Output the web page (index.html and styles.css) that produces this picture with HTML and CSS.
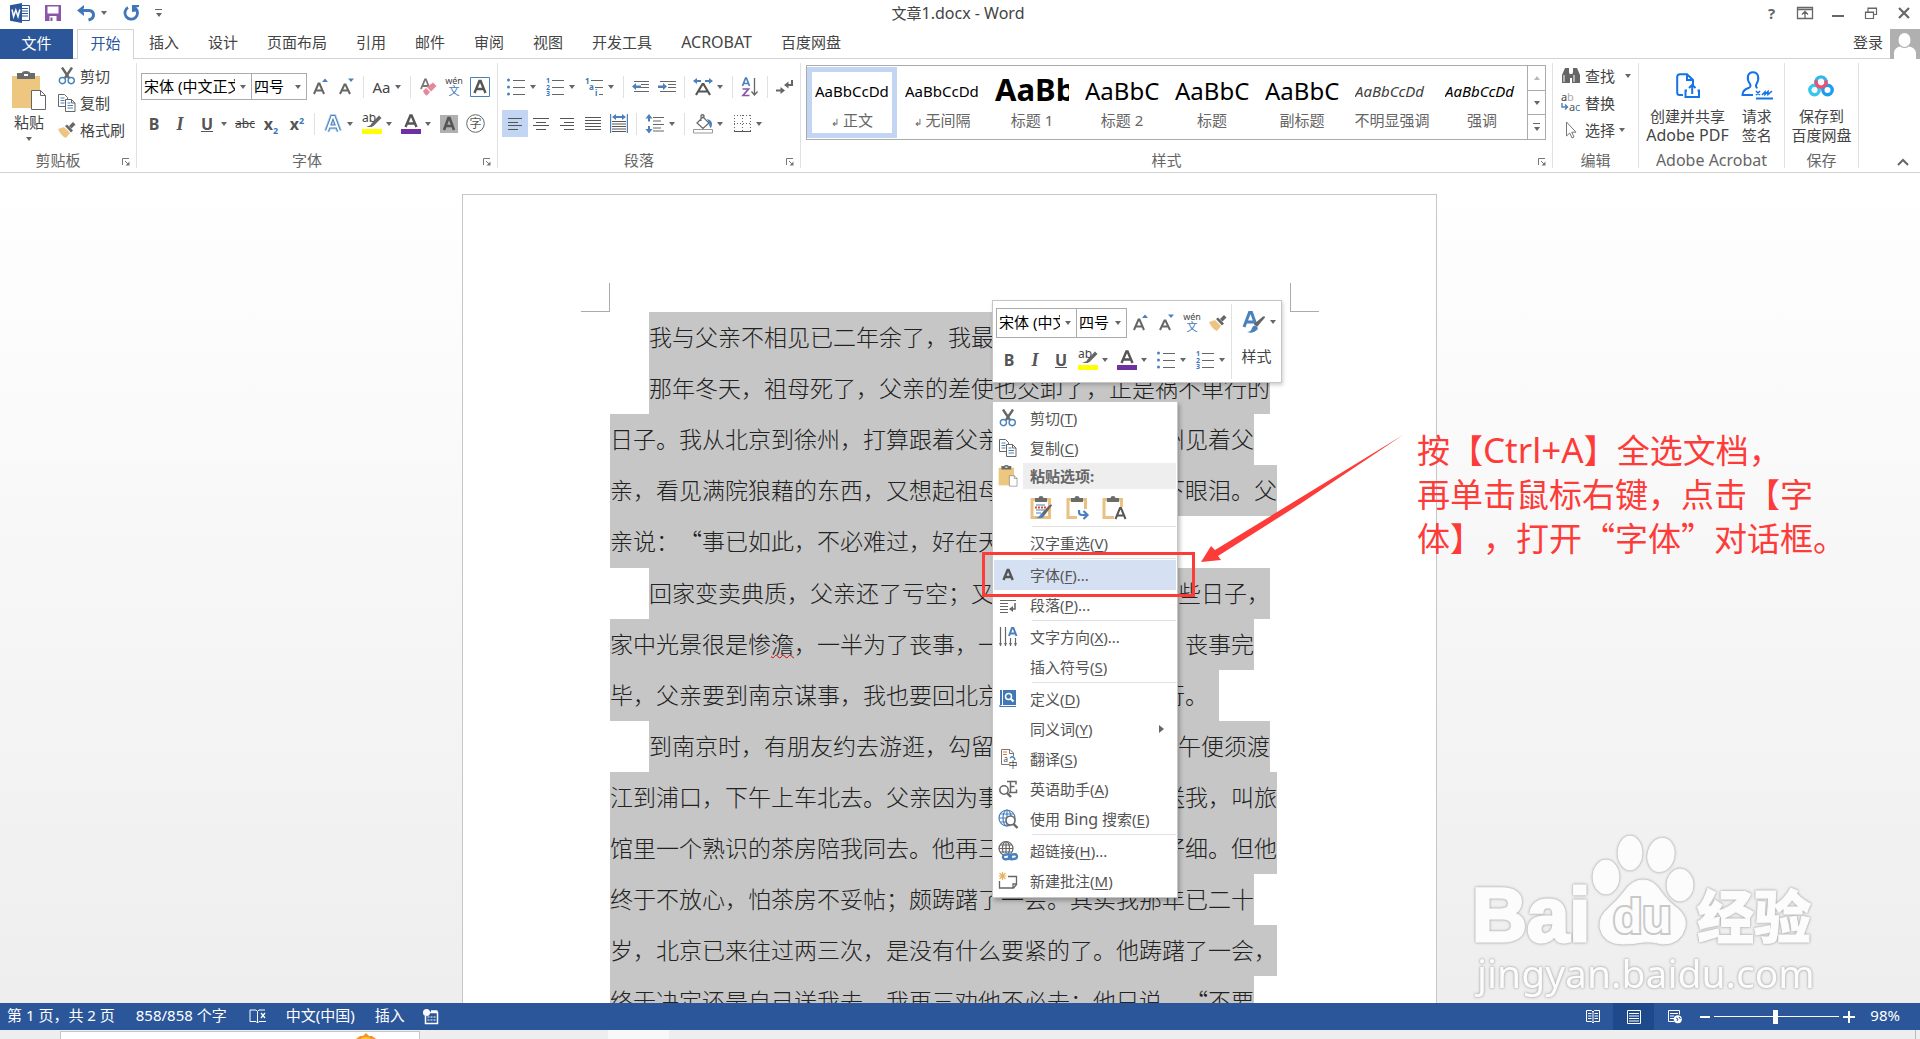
FILE: index.html
```html
<!DOCTYPE html>
<html lang="zh-CN">
<head>
<meta charset="utf-8">
<title>文章1.docx - Word</title>
<meta name="viewport" content="width=device-width, initial-scale=1">
<link rel="stylesheet" href="styles.css">
</head>
<body>
<svg class="defs" aria-hidden="true">
  <symbol id="i-cut" viewBox="0 0 18 18"><g fill="none"><path d="M4 0.5 11 11M14 0.5 7 11" stroke="#666" stroke-width="2.4"/><circle cx="4.4" cy="13.6" r="3.1" stroke="#4a80bb" stroke-width="1.4"/><circle cx="13.2" cy="13.6" r="3.1" stroke="#4a80bb" stroke-width="1.4"/></g></symbol>
  <symbol id="i-copy" viewBox="0 0 18 18"><g fill="#fff" stroke="#666"><path d="M.5 .5h6l3 3v9h-9z"/><path d="M7.500 5.500h6l3.500 3.500v8.500h-9.500z"/><path d="M13.500 5.500v3.500h3.500" fill="none"/><path d="M2.500 4h4M2.500 6.500h4M2.500 9h4M9.500 9h3M9.500 11.500h5.500M9.500 14h5.500" stroke="#4a80bb"/></g></symbol>
  <symbol id="i-painter" viewBox="0 0 18 18"><path d="M0 8 6 6l6 6-4 5q-5-2-8-9z" fill="#ecc583"/><path d="m7 5 2-1.500 6 6-2 2zM11 5l4-4 2.500 2.500-4 4z" fill="#666"/></symbol>
  <symbol id="i-paste" viewBox="0 0 36 40"><path d="M1 5h28v32H1z" fill="#edc67f"/><path d="M6 2h5q0-2 4-2t4 2h5v6H6z" fill="#6b6b6b"/><path d="M13 3h4v2h-4z" fill="#fff"/><path d="M20.500 19.500h9l5 5v14h-14z" fill="#fff" stroke="#666"/><path d="M29.500 19.500v5h5" fill="none" stroke="#666"/></symbol>
  <symbol id="i-board" viewBox="0 0 24 24"><path d="M2 3.500h17.500v18H2z" fill="#fff" stroke="#e9c283" stroke-width="3"/><path d="M5 2h3.500q0-2 2.500-2t2.500 2H17v4H5z" fill="#6b6b6b"/></symbol>
  <symbol id="i-grow" viewBox="0 0 18 18"><path d="M3 16 7.500 5.500h1L13 16M4.500 12.500h7" fill="none" stroke="#666" stroke-width="2"/><path d="M11 4l3-3.500L17 4z" fill="#4a80bb"/></symbol>
  <symbol id="i-shrink" viewBox="0 0 18 18"><path d="M3 16 7.500 6.500h1L13 16M4.500 12.500h7" fill="none" stroke="#666" stroke-width="2"/><path d="M11 .5h6L14 4z" fill="#4a80bb"/></symbol>
  <symbol id="i-pinyin" viewBox="0 0 20 20"><text x="10" y="7" font-size="9" text-anchor="middle" fill="#444" class="svg-latin">wén</text><text x="10" y="18" font-size="11" text-anchor="middle" fill="#3b76b5" class="svg-cjk">文</text></symbol>
  <symbol id="i-mark" viewBox="0 0 20 20"><text x="0" y="8" font-size="12" fill="#444" class="svg-latin">ab</text><path d="m9 10 8-8.500 2.500 2.500-8 8-3 1z" fill="#666"/><path d="M4 13l5-2 1.500 2z" fill="#666"/><path d="M0 15h20v5H0z" fill="#ff0"/></symbol>
  <symbol id="i-color" viewBox="0 0 20 20"><path d="M4.500 13 9.400 1.500h1.200L15.500 13M6 9.500h8" fill="none" stroke="#555" stroke-width="2.400"/><path d="M0 15h20v5H0z" fill="#7030a0"/></symbol>
  <symbol id="i-bullets" viewBox="0 0 18 18"><g fill="#4a80bb"><circle cx="1.500" cy="2" r="1.500"/><circle cx="1.500" cy="9" r="1.500"/><circle cx="1.500" cy="16" r="1.500"/></g><path d="M6 2.500h12M6 9.500h12M6 16.500h12" stroke="#666"/></symbol>
  <symbol id="i-numbers" viewBox="0 0 18 18"><path d="M6 2.500h12M6 9.500h12M6 16.500h12" stroke="#666"/><g font-size="7" fill="#3b76b5" font-weight="700" class="svg-latin"><text x="0" y="5">1</text><text x="0" y="12">2</text><text x="0" y="18">3</text></g></symbol>
  <symbol id="i-launch" viewBox="0 0 8 8"><path d="M.5 7V.5H7M3 3l3.500 3.500" fill="none" stroke="#777"/><path d="M7.500 3.500v4h-4z" fill="#777"/></symbol>
</svg>

<header class="titlebar">
  <div class="quick">
    <svg class="logo" width="20" height="20" viewBox="0 0 20 20"><path d="M9 2.500h10.500v15H9" fill="#fff" stroke="#2b579a"/><path d="M12 5.500h6M12 8h6M12 10.500h6M12 13h6" stroke="#2b579a"/><path d="M0 2.200 12 0v20L0 17.800z" fill="#2b579a"/><path d="m2 6.500 1.600 7L5.800 7l2.200 6.500 1.800-7" fill="none" stroke="#fff" stroke-width="1.500"/></svg>
    <button class="q-save" aria-label="保存"><svg width="16" height="16" viewBox="0 0 16 16"><path d="M0 0h16v16H0z" fill="#8956a8"/><path d="M2.500 1.500h11v7h-11zM4.500 11h7v5h-7z" fill="#fff"/><path d="M5.500 12.500h2V16h-2z" fill="#8956a8"/></svg></button>
    <button class="q-undo" aria-label="撤消"><svg width="18" height="16" viewBox="0 0 18 16"><path d="M4 5.500h8q4.500.5 4.500 4.500 0 4-5 5" fill="none" stroke="#3f78b7" stroke-width="3"/><path d="M0 5.500 7 0v3L5 5.500 7 8v3z" fill="#3f78b7"/></svg><i class="caret"></i></button>
    <button class="q-redo" aria-label="重复"><svg width="17" height="16" viewBox="0 0 17 16"><path d="M5 2.500a6.300 6.300 0 1 0 7.500.8" fill="none" stroke="#3f78b7" stroke-width="2.800"/><path d="M9 0h7v2l-3 .5v4L9 7z" fill="#3f78b7"/></svg></button>
    <button class="q-more" aria-label="自定义快速访问工具栏"><i class="bar"></i><i class="caret"></i></button>
  </div>
  <h1 class="title">文章<span class="lat">1.docx - Word</span></h1>
  <div class="window">
    <button aria-label="帮助" class="help">?</button>
    <button aria-label="功能区显示选项"><svg width="16" height="12" viewBox="0 0 16 12"><path d="M.5.500h15v11H.5zM1 2.500h14M8 11V5M5 7.500l3-3 3 3" fill="none" stroke="#666" stroke-width="1.300"/></svg></button>
    <button aria-label="最小化"><svg width="12" height="12" viewBox="0 0 12 12"><path d="M0 9h12" stroke="#666" stroke-width="2"/></svg></button>
    <button aria-label="还原"><svg width="12" height="12" viewBox="0 0 12 12"><path d="M.5 5h8v6.500h-8zM3 4.500V1h8.500v6.500H9M.5 5.500h8M3 1.500h8.500" fill="none" stroke="#666" stroke-width="1.200"/></svg></button>
    <button aria-label="关闭"><svg width="12" height="12" viewBox="0 0 12 12"><path d="m1 1 10 10M11 1 1 11" stroke="#666" stroke-width="2.200"/></svg></button>
  </div>
</header>

<nav class="tabs">
  <button class="tab-file">文件</button>
  <button class="tab-home">开始</button>
  <div class="tab-list">
    <button>插入</button><button>设计</button><button>页面布局</button><button>引用</button><button>邮件</button><button>审阅</button><button>视图</button><button>开发工具</button><button class="lat">ACROBAT</button><button>百度网盘</button>
  </div>
  <a href="#login" class="login">登录</a>
  <svg class="avatar" width="30" height="30" viewBox="0 0 30 30"><path d="M0 0h30v30H0z" fill="#b0b0b0"/><ellipse cx="14.500" cy="11" rx="6" ry="7" fill="#fff"/><path d="M4 30V23q1-4.500 6-5.500 4.500 3 9 0 6 1 7 6V30z" fill="#fff"/></svg>
</nav>

<section class="ribbon">
  <div class="group g-clip">
    <div class="clip">
      <button class="paste"><svg width="36" height="40"><use href="#i-paste"/></svg><span>粘贴</span><i class="caret"></i></button>
      <div class="stack">
        <button><svg width="18" height="18"><use href="#i-cut"/></svg>剪切</button>
        <button><svg width="18" height="18"><use href="#i-copy"/></svg>复制</button>
        <button><svg width="18" height="18"><use href="#i-painter"/></svg>格式刷</button>
      </div>
    </div>
    <div class="name with-launch">剪贴板<svg class="launch" width="8" height="8"><use href="#i-launch"/></svg></div>
  </div>

  <div class="group g-font">
    <div class="rows">
      <div class="row">
        <label class="combo wide"><select aria-label="字体"><option>宋体 (中文正文)</option></select><i class="caret"></i></label>
        <label class="combo"><select aria-label="字号"><option>四号</option></select><i class="caret"></i></label>
        <button class="tool" aria-label="增大字号"><svg width="18" height="18"><use href="#i-grow"/></svg></button>
        <button class="tool" aria-label="减小字号"><svg width="18" height="18"><use href="#i-shrink"/></svg></button>
        <i class="sep"></i>
        <button class="tool split aa" aria-label="更改大小写"><b>Aa</b><i class="caret"></i></button>
        <i class="sep"></i>
        <button class="tool" aria-label="清除格式"><svg width="18" height="18" viewBox="0 0 18 18"><path d="M2 11 6 1.500h1L10 9M4 8h5" fill="none" stroke="#777" stroke-width="1.800"/><path d="m4 13 3-3 4 4-3 3.500q-2 0-4-4.500zM8 9l6-4.500 3.500 3.500-5.500 5.500z" fill="#e8869b"/></svg></button>
        <button class="tool" aria-label="拼音指南"><svg width="20" height="20"><use href="#i-pinyin"/></svg></button>
        <button class="tool" aria-label="字符边框"><svg width="20" height="20" viewBox="0 0 20 20"><path d="M.5.500h19v19H.5z" fill="#fff" stroke="#4a80bb"/><path d="M4.500 16 9.400 4h1.200l4.900 12M6 12h8" fill="none" stroke="#555" stroke-width="2.400"/></svg></button>
      </div>
      <div class="row">
        <button class="tool"><b class="fmt">B</b></button>
        <button class="tool"><b class="fmt it">I</b></button>
        <button class="tool split"><b class="fmt un">U</b><i class="caret"></i></button>
        <button class="tool"><s class="strike">abc</s></button>
        <button class="tool"><b class="script">x<sub>2</sub></b></button>
        <button class="tool"><b class="script">x<sup>2</sup></b></button>
        <i class="sep"></i>
        <button class="tool split" aria-label="文本效果"><svg width="18" height="20" viewBox="0 0 18 20"><path d="M3 17 8.200 3h1.600L15 17M5.500 12.500h7" fill="none" stroke="#b5d2ef" stroke-width="6"/><path d="M3 17 8.200 3h1.600L15 17M5.500 12.500h7" fill="none" stroke="#4a80bb" stroke-width="4"/><path d="M3 17 8.200 3h1.600L15 17M5.500 12.500h7" fill="none" stroke="#fff" stroke-width="2"/></svg><i class="caret"></i></button>
        <button class="tool split" aria-label="突出显示"><svg width="20" height="20"><use href="#i-mark"/></svg><i class="caret"></i></button>
        <button class="tool split" aria-label="字体颜色"><svg width="20" height="20"><use href="#i-color"/></svg><i class="caret"></i></button>
        <button class="tool" aria-label="字符底纹"><svg width="18" height="18" viewBox="0 0 18 18"><path d="M0 0h18v18H0z" fill="#b0b0b0"/><path d="M4 15 8.400 3h1.200L14 15M5.500 11h7" fill="none" stroke="#555" stroke-width="2.600"/></svg></button>
        <button class="tool" aria-label="带圈字符"><svg width="19" height="19" viewBox="0 0 19 19"><circle cx="9.500" cy="9.500" r="8.800" fill="none" stroke="#666"/><text x="9.500" y="14" text-anchor="middle" font-size="12" fill="#555" class="svg-cjk">字</text></svg></button>
      </div>
    </div>
    <div class="name with-launch">字体<svg class="launch" width="8" height="8"><use href="#i-launch"/></svg></div>
  </div>

  <div class="group g-para">
    <div class="rows">
      <div class="row">
        <button class="tool split" aria-label="项目符号"><svg width="18" height="18"><use href="#i-bullets"/></svg><i class="caret"></i></button>
        <button class="tool split" aria-label="编号"><svg width="18" height="18"><use href="#i-numbers"/></svg><i class="caret"></i></button>
        <button class="tool split" aria-label="多级列表"><svg width="18" height="18" viewBox="0 0 18 18"><path d="M6 2.500h12M10 9.500h8M14 16.500h4" stroke="#666"/><g font-size="8" fill="#3b76b5" font-weight="700" class="svg-latin"><text x="0" y="6">1</text><text x="4" y="12">a</text><text x="10" y="18">i</text></g></svg><i class="caret"></i></button>
        <i class="sep"></i>
        <button class="tool" aria-label="减少缩进量"><svg width="18" height="12" viewBox="0 0 18 12"><path d="M2 .5h15M9 3.500h8M9 6.500h8M2 10.500h15" stroke="#666"/><path d="M0 5.500 4 2v2.500h5v2.500H4V9z" fill="#4a80bb"/></svg></button>
        <button class="tool" aria-label="增加缩进量"><svg width="18" height="12" viewBox="0 0 18 12"><path d="M2 .5h16M10 3.500h8M10 6.500h8M2 10.500h16" stroke="#666"/><path d="M9 5.500 5 2v2.500H0v2.500h5V9z" fill="#4a80bb"/></svg></button>
        <i class="sep"></i>
        <button class="tool split" aria-label="中文版式"><svg width="20" height="18" viewBox="0 0 20 18"><path d="M3 17 9.500 6h1L17 17M6 13.500h8" fill="none" stroke="#555" stroke-width="2.200"/><path d="M0 3 4 0v2h4v2H4v2zM20 3l-4-3v2h-4v2h4v2z" fill="#4a80bb"/></svg><i class="caret"></i></button>
        <i class="sep"></i>
        <button class="tool" aria-label="排序"><svg width="18" height="20" viewBox="0 0 18 20"><path d="M1.500 9 4.600 1h.8L8.500 9M2.500 6.500h5" fill="none" stroke="#4a80bb" stroke-width="1.700"/><path d="M1.500 12h6L2 18.500h6.500" fill="none" stroke="#8956a8" stroke-width="1.700"/><path d="M13.500 1v17M10.500 14.500l3 3.500 3-3.500" fill="none" stroke="#666" stroke-width="1.300"/></svg></button>
        <i class="sep"></i>
        <button class="tool" aria-label="显示编辑标记"><svg width="18" height="16" viewBox="0 0 18 16"><path d="M16 1v5h-4" fill="none" stroke="#666" stroke-width="2"/><path d="m8 6 4.500-3.500v7zM9 11.500 4.500 8v7z" fill="#666"/><path d="M0 11.500h6" stroke="#666" stroke-width="2"/></svg></button>
      </div>
      <div class="row">
        <button class="tool on" aria-label="左对齐"><svg width="16" height="12" viewBox="0 0 16 12"><path d="M1 .5h14M1 4.500h10M1 7.500h14M1 11.500h10" stroke="#555"/></svg></button>
        <button class="tool" aria-label="居中"><svg width="16" height="12" viewBox="0 0 16 12"><path d="M0 .5h16M3 4.500h10M0 7.500h16M3 11.500h10" stroke="#555"/></svg></button>
        <button class="tool" aria-label="右对齐"><svg width="16" height="12" viewBox="0 0 16 12"><path d="M1 .5h14M5 4.500h10M1 7.500h14M5 11.500h10" stroke="#555"/></svg></button>
        <button class="tool" aria-label="两端对齐"><svg width="16" height="13" viewBox="0 0 16 13"><path d="M0 .5h16M0 3.500h16M0 6.500h16M0 9.500h16M0 12.500h16" stroke="#555"/></svg></button>
        <button class="tool" aria-label="分散对齐"><svg width="18" height="19" viewBox="0 0 18 19"><path d="M.6 0v19M17.400 0v19" stroke="#4a80bb" stroke-width="1.200"/><path d="M2 7.500h14M2 10h14M2 12.500h14M2 15h14M2 17.500h14" stroke="#555"/><path d="m2 3 4-3v2h6V0l4 3-4 3V4H6v2z" fill="#4a80bb"/></svg></button>
        <i class="sep"></i>
        <button class="tool split" aria-label="行距"><svg width="18" height="20" viewBox="0 0 18 20"><path d="M7 3.500h11M7 7h8M7 10.500h11M7 14h8M7 17h11" stroke="#666"/><path d="m3 0 3.500 4.500H4v3H2v-3H-.5zM3 19.500 6.500 15H4v-3H2v3H-.5z" fill="#4a80bb"/></svg><i class="caret"></i></button>
        <i class="sep"></i>
        <button class="tool split" aria-label="底纹"><svg width="20" height="20" viewBox="0 0 20 20"><path d="m4 9 6-6 6 6-6 5.500zM8 7V1.500q1.500-1.500 3 0V4" fill="none" stroke="#666" stroke-width="1.200"/><path d="M14 5q5 1 5 5 0 3-1.500 4-1.500-2-1.500-5z" fill="#4a80bb"/><path d="M.5 15.500h19v3.500H.5z" fill="#fff" stroke="#999"/></svg><i class="caret"></i></button>
        <button class="tool split" aria-label="边框"><svg width="17" height="17" viewBox="0 0 17 17"><path d="M0 .5h17M0 8.500h17M.5 0v16M8.500 0v16M16.500 0v16" stroke="#666" stroke-dasharray="1 2"/><path d="M0 16.500h17" stroke="#555"/></svg><i class="caret"></i></button>
      </div>
    </div>
    <div class="name with-launch">段落<svg class="launch" width="8" height="8"><use href="#i-launch"/></svg></div>
  </div>

  <div class="group g-styles">
    <div class="gallery">
      <button class="style on"><span class="sample">AaBbCcDd</span><span class="label"><small>↲</small> 正文</span></button>
      <button class="style"><span class="sample">AaBbCcDd</span><span class="label"><small>↲</small> 无间隔</span></button>
      <button class="style"><span class="sample h1">AaBb</span><span class="label">标题 1</span></button>
      <button class="style"><span class="sample h2">AaBbC</span><span class="label">标题 2</span></button>
      <button class="style"><span class="sample h2">AaBbC</span><span class="label">标题</span></button>
      <button class="style"><span class="sample h2">AaBbC</span><span class="label">副标题</span></button>
      <button class="style"><span class="sample em soft">AaBbCcDd</span><span class="label">不明显强调</span></button>
      <button class="style"><span class="sample em">AaBbCcDd</span><span class="label">强调</span></button>
      <div class="scroll">
        <button aria-label="上一行"><i class="caret up"></i></button>
        <button aria-label="下一行"><i class="caret"></i></button>
        <button aria-label="其他"><i class="bar"></i><i class="caret"></i></button>
      </div>
    </div>
    <div class="name with-launch">样式<svg class="launch" width="8" height="8"><use href="#i-launch"/></svg></div>
  </div>

  <div class="group g-edit">
    <div class="stack">
      <button><svg width="20" height="18" viewBox="0 0 20 18"><path d="M4 1h4v4l1 3v8H1V8zM12 1h4l3 7v8h-8V8l1-3z" fill="#666"/><path d="M8.500 7h3v4h-3z" fill="#666"/><path d="M3 8v7M13 8v7" stroke="#fff"/></svg>查找<i class="caret far"></i></button>
      <button><svg width="20" height="20" viewBox="0 0 20 20"><g font-size="11" class="svg-latin"><text x="0" y="8" fill="#444">a</text><text x="6" y="8" fill="#aaa">b</text><text x="8" y="18" fill="#555">a</text><text x="14" y="18" fill="#3b76b5">c</text></g><path d="M1 10v4h5M4 11.500 6.500 14 4 16.500" fill="none" stroke="#4a80bb" stroke-width="1.400"/></svg>替换</button>
      <button><svg width="20" height="18" viewBox="0 0 20 18"><path d="M5.500 1v14l3.200-3 2.300 5 2-1-2.200-4.800H15z" fill="#fff" stroke="#777"/></svg>选择<i class="caret"></i></button>
    </div>
    <div class="name">编辑</div>
  </div>

  <div class="group g-acro">
    <div class="bigs">
      <button class="big"><svg width="24" height="26" viewBox="0 0 24 26"><path d="M7 22H3.500Q1.200 22 1.200 19.500V4Q1.200 1.200 4 1.200h7L17 7v5M11 1.500V7h5.500M11 17.500H9.500V24H23v-6.500h-1.500M16.200 21v-8.500M13 15l3.200-3.200L19.500 15" fill="none" stroke="#1473e6" stroke-width="2"/></svg><span>创建并共享</span><span class="lat">Adobe PDF</span></button>
      <button class="big"><svg width="32" height="30" viewBox="0 0 32 30"><path d="M12 24H1.500q0-5 6-7 3-1 1.500-4-3-4-2-8Q8 1.200 12 1.200T17 5q1 4-1.500 8-1.500 3 1 4M15 27.500h17" fill="none" stroke="#1473e6" stroke-width="2"/><path d="m15 20 4 4M19 20l-4 4M21 24l3-3v2.500l3-3v3l4-3.500" fill="none" stroke="#1473e6" stroke-width="1.600"/></svg><span>请求</span><span>签名</span></button>
    </div>
    <div class="name lat">Adobe Acrobat</div>
  </div>

  <div class="group g-save">
    <div class="bigs">
      <button class="big"><svg width="26" height="22" viewBox="0 0 26 22"><g fill="none" stroke-width="3.400"><path d="M8 8.500a5.200 5.200 0 1 1 10 0" stroke="#35b5e8"/><circle cx="6.500" cy="15" r="4.700" stroke="#38c5ee"/><circle cx="19.500" cy="15" r="4.700" stroke="#1c9cf2"/><path d="M8.400 5.500a5 5 0 1 0 9.400 0" stroke="#f0506e"/></g></svg><span>保存到</span><span>百度网盘</span></button>
    </div>
    <div class="name">保存</div>
  </div>

  <div class="collapse"><button aria-label="折叠功能区"><svg width="12" height="8" viewBox="0 0 12 8"><path d="m1 7 5-5 5 5" fill="none" stroke="#666" stroke-width="2"/></svg></button></div>
</section>

<main class="workspace">
  <div class="stage">
    <article class="page">
      <div class="marks"><i class="mark left"></i><i class="mark right"></i></div>
      <p><span>我与父亲不相见已二年余了，我最不能忘记的是他的背影。</span></p>
      <p class="tall"><span>那年冬天，祖母死了，父亲的差使也交卸了，正是祸不单行的</span><span>日子。我从北京到徐州，打算跟着父亲奔丧回家。到徐州见着父</span><span>亲，看见满院狼藉的东西，又想起祖母，不禁簌簌地流下眼泪。父</span><span class="end">亲说：“事已如此，不必难过，好在天无绝人之路！”</span></p>
      <p><span>回家变卖典质，父亲还了亏空；又借钱办了丧事。这些日子，</span><span>家中光景很是惨<em class="typo">澹</em>，一半为了丧事，一半为了父亲赋闲。丧事完</span><span class="end">毕，父亲要到南京谋事，我也要回北京念书，我们便同行。</span></p>
      <p><span>到南京时，有朋友约去游逛，勾留了一日；第二日上午便须渡</span><span>江到浦口，下午上车北去。父亲因为事忙，本已说定不送我，叫旅</span><span>馆里一个熟识的茶房陪我同去。他再三嘱咐茶房，甚是仔细。但他</span><span>终于不放心，怕茶房不妥帖；颇踌躇了一会。其实我那年已二十</span><span>岁，北京已来往过两三次，是没有什么要紧的了。他踌躇了一会，</span><span>终于决定还是自己送我去。我再三劝他不必去；他只说，“不要</span></p>
    </article>

    <div class="mini">
      <div class="mini-main">
        <div class="row">
          <label class="combo mid"><select aria-label="字体"><option>宋体 (中文正文)</option></select><i class="caret"></i></label>
          <label class="combo small"><select aria-label="字号"><option>四号</option></select><i class="caret"></i></label>
          <button class="tool" aria-label="增大字号"><svg width="18" height="18"><use href="#i-grow"/></svg></button>
          <button class="tool" aria-label="减小字号"><svg width="18" height="18"><use href="#i-shrink"/></svg></button>
          <button class="tool" aria-label="拼音指南"><svg width="20" height="20"><use href="#i-pinyin"/></svg></button>
          <button class="tool" aria-label="格式刷"><svg width="18" height="18"><use href="#i-painter"/></svg></button>
        </div>
        <div class="row">
          <button class="tool"><b class="fmt">B</b></button>
          <button class="tool"><b class="fmt it">I</b></button>
          <button class="tool"><b class="fmt un">U</b></button>
          <button class="tool split" aria-label="突出显示"><svg width="20" height="20"><use href="#i-mark"/></svg><i class="caret"></i></button>
          <button class="tool split" aria-label="字体颜色"><svg width="20" height="20"><use href="#i-color"/></svg><i class="caret"></i></button>
          <button class="tool split" aria-label="项目符号"><svg width="18" height="18"><use href="#i-bullets"/></svg><i class="caret"></i></button>
          <button class="tool split" aria-label="编号"><svg width="18" height="18"><use href="#i-numbers"/></svg><i class="caret"></i></button>
        </div>
      </div>
      <button class="mini-style"><span class="top"><svg width="24" height="24" viewBox="0 0 24 24"><path d="M2 17 7.500 2.500h2L14 15M4 12h9" fill="none" stroke="#4a80bb" stroke-width="3"/><path d="m12 14 9-7.500q2-1 2 1L15 17z" fill="#666"/><path d="M5 22q4 0 5-4 1-3 4-2 3 2 1 4-4 4-10 2z" fill="#4a80bb"/></svg><i class="caret"></i></span><span>样式</span></button>
    </div>

    <div class="menu" role="menu">
      <button><svg width="18" height="18"><use href="#i-cut"/></svg>剪切(<u>T</u>)</button>
      <button><svg width="18" height="18"><use href="#i-copy"/></svg>复制(<u>C</u>)</button>
      <div class="menu-head"><svg width="20" height="22"><use href="#i-paste"/></svg><strong>粘贴选项:</strong></div>
      <div class="menu-paste">
        <button aria-label="保留源格式"><svg width="24" height="24" viewBox="0 0 24 24"><use href="#i-board"/><path d="M6 9h9M6 14h9M6 17h5" stroke="#4a80bb"/><path d="M5 11.500h11" stroke="#d65532" stroke-width="2" stroke-dasharray="2 1"/><path d="m11 18 8-8.500q3-2 3 0L14 20z" fill="#666"/><path d="M5 22q4 0 5-3 2-3 4 0 1 4-9 3z" fill="#4a80bb"/></svg></button>
        <button aria-label="合并格式"><svg width="24" height="24" viewBox="0 0 24 24"><use href="#i-board"/><path d="M11 13h13v11H11z" fill="#fff"/><path d="M13 14v2q0 3 3 3h5M17.500 15l4 4-4 4" fill="none" stroke="#4a80bb" stroke-width="2.200"/></svg></button>
        <button aria-label="只保留文本"><svg width="24" height="24" viewBox="0 0 24 24"><use href="#i-board"/><path d="M12 11h12v13H12z" fill="#fff"/><path d="M13.500 23 18 12h1l4.500 11M15 19.500h7" fill="none" stroke="#555" stroke-width="2"/></svg></button>
      </div>
      <hr>
      <button><i class="noicon"></i>汉字重选(<u>V</u>)</button>
      <hr>
      <button class="hot"><svg width="18" height="18" viewBox="0 0 18 18"><path d="M4.500 14 8.600 4h1l4.100 10M6 11h6" fill="none" stroke="#555" stroke-width="2.400"/></svg>字体(<u>F</u>)...</button>
      <button><svg width="18" height="18" viewBox="0 0 18 18"><path d="M1 4.500h16M1 7.500h8M1 10.500h8M1 13.500h8M1 16.500h8" stroke="#666"/><path d="M16 7v6h-3" fill="none" stroke="#666" stroke-width="1.500"/><path d="m10 13 4-3v6z" fill="#666"/></svg>段落(<u>P</u>)...</button>
      <hr>
      <button><svg width="18" height="20" viewBox="0 0 18 20"><path d="M1.500 0v19M6.500 0v19M11.500 11v8M16.500 11v8" stroke="#666" stroke-width="1.200"/><path d="M0 16l1.500 3L3 16zM5 16l1.500 3L8 16zM10 16l1.500 3 1.500-3zM15 16l1.500 3 1.500-3z" fill="#666"/><path d="m10 9 3-8h1.400L17.500 9M11 6.500h5.500" fill="none" stroke="#4a80bb" stroke-width="2"/></svg>文字方向(<u>X</u>)...</button>
      <button><i class="noicon"></i>插入符号(<u>S</u>)</button>
      <hr>
      <button><svg width="18" height="18" viewBox="0 0 18 18"><path d="M1 0h16v15H1z" fill="#4278b5"/><path d="M1 16.500h16M1 15v2" stroke="#4278b5" stroke-width="1.200"/><path d="M3.500 0v15" stroke="#fff"/><circle cx="9.500" cy="6.500" r="3" fill="none" stroke="#fff" stroke-width="1.500"/><path d="m11.500 8.500 3 3" stroke="#fff" stroke-width="2"/></svg>定义(<u>D</u>)</button>
      <button><i class="noicon"></i>同义词(<u>Y</u>)<i class="next"></i></button>
      <button><svg width="18" height="20" viewBox="0 0 18 20"><path d="M10 15.500H2.500V.5H11l3.500 3.500v3M10.500.500v4h4" fill="none" stroke="#777"/><path d="M4 3h4M4 5.500h4" stroke="#dc7a3c"/><path d="M11 9q4-3 5 2" fill="none" stroke="#4a80bb" stroke-width="1.500"/><g fill="#444"><text x="4.500" y="13" font-size="8" class="svg-latin">a</text><text x="9.500" y="19" font-size="9" class="svg-cjk">中</text></g></svg>翻译(<u>S</u>)</button>
      <button><svg width="18" height="18" viewBox="0 0 18 18"><circle cx="5" cy="10" r="4.200" fill="none" stroke="#666" stroke-width="1.500"/><path d="m8 13 4 4" stroke="#666" stroke-width="2.400"/><path d="M8 1.500h9v3M11.500 1.500v11M11.500 6.500h4M10 12.500h7.500v-3" fill="none" stroke="#666" stroke-width="1.500"/></svg>英语助手(<u>A</u>)</button>
      <button><svg width="20" height="20" viewBox="0 0 20 20"><g fill="none" stroke="#4a80bb" stroke-width="1.200"><circle cx="9" cy="9" r="8"/><ellipse cx="9" cy="9" rx="4" ry="8"/><path d="M9 1v16M1 9h16M2.500 5h13M2.500 13h6"/></g><circle cx="12.500" cy="11.500" r="4.500" fill="#fff" stroke="#666" stroke-width="1.600"/><path d="m15.500 15 4 4" stroke="#666" stroke-width="2.400"/></svg>使用&nbsp;<span class="lat">Bing</span>&nbsp;搜索(<u>E</u>)</button>
      <hr>
      <button><svg width="20" height="20" viewBox="0 0 20 20"><g fill="none" stroke="#666" stroke-width="1.200"><circle cx="8" cy="7.500" r="7"/><ellipse cx="8" cy="7.500" rx="3.500" ry="7"/><path d="M8 .5v14M1 7.500h14M2 4h12M2 11h12"/></g><path d="M5 12h15v8H5z" fill="#fff"/><g fill="none" stroke="#4a80bb" stroke-width="2.400"><rect x="5" y="13.500" width="8" height="4.500" rx="2.200" transform="rotate(-8 9 16)"/><rect x="11" y="13.500" width="8" height="4.500" rx="2.200" transform="rotate(-8 15 16)"/></g></svg>超链接(<u>H</u>)...</button>
      <button><svg width="20" height="18" viewBox="0 0 20 18"><path d="M10 4.500h8.500v8l-3 3.500H1.500V9M18.500 12h-3.500v4" fill="none" stroke="#666" stroke-width="1.300"/><path d="M4.500 0v8M.5 4h8M1.500 1l6 6M7.500 1l-6 6" stroke="#e8b35c" stroke-width="1.200"/></svg>新建批注(<u>M</u>)</button>
    </div>

    <div class="focus-box"></div>
    <svg class="arrow" width="204" height="130" viewBox="0 0 204 130"><path d="M1 128 11 112 15 116 100 64 203 1 100 70 18 122 21 126z" fill="#fd3c3a"/></svg>
    <p class="callout">按【<span class="key">Ctrl+A</span>】全选文档，<br>再单击鼠标右键，点击【字<br>体】，打开“字体”对话框。</p>
  </div>

  <svg class="watermark" width="352" height="170" viewBox="0 0 352 170">
    <g class="wm-glow" fill="#fcfcfc" stroke="#fcfcfc">
      <text x="1" y="110" font-size="76" stroke-width="3" class="wm-latin">Bai</text>
      <ellipse cx="135" cy="46" rx="13" ry="17"/><ellipse cx="159" cy="22" rx="12" ry="17"/><ellipse cx="190" cy="24" rx="13" ry="17" transform="rotate(12 190 24)"/><ellipse cx="209" cy="54" rx="13" ry="16"/>
      <path d="M172 49q11 0 18 12 8 11 17 17 9 8 7 18-4 17-22 17-12-3-20-2-10 2-20 2-20 0-23-17-1-11 9-19 8-7 15-16 8-12 19-12z"/>
      <text x="226" y="107" font-size="57" class="wm-cjk">经验</text>
      <text x="6" y="157" font-size="39" stroke="none" class="wm-url">jingyan.baidu.com</text>
    </g>
    <text x="142" y="102" font-size="48" fill="#fcfcfc" stroke="#c9c9c9" stroke-width="4" paint-order="stroke" class="wm-latin">du</text>
  </svg>
</main>

<footer class="status">
  <span class="s-page">第 1 页，共 2 页</span>
  <span class="s-words">858/858 个字</span>
  <svg class="s-proof" width="18" height="15" viewBox="0 0 18 15"><path d="M8.500 2.500 7 1H1v11.500h6l1.500 1.500 1.500-1.500h7M8.500 2.500V14M8.500 2.500 10 1h6" fill="none" stroke="#fff"/><path d="m12 4 4 5M16 4l-4 5" stroke="#fff" stroke-width="1.300"/></svg>
  <span class="s-lang">中文(中国)</span>
  <span class="s-mode">插入</span>
  <svg class="s-macro" width="16" height="15" viewBox="0 0 16 15"><circle cx="3.500" cy="3.500" r="3.500" fill="#fff"/><path d="M5 3.500h9.500v11h-12V7M8 2h6.500" fill="none" stroke="#fff" stroke-width="1.500"/><path d="M4.500 8h8M4.500 11h8" stroke="#fff" stroke-dasharray="2 1"/></svg>
  <div class="views">
    <button aria-label="阅读视图"><svg width="14" height="14" viewBox="0 0 14 14"><path d="M.5.500h5L7 2 8.500.500h5v11h-5L7 13l-1.500-1.500h-5zM7 2v11M2 3.500h3.500M2 6h3.500M2 8.500h3.500M8.500 3.500H12M8.500 6H12M8.500 8.500H12" fill="none" stroke="#fff"/></svg></button>
    <button class="on" aria-label="页面视图"><svg width="14" height="14" viewBox="0 0 14 14"><path d="M.5.500h13v13H.5zM2 3.500h10M2 6h10M2 8.500h10M2 11h10" fill="none" stroke="#fff"/></svg></button>
    <button aria-label="Web 版式视图"><svg width="14" height="14" viewBox="0 0 14 14"><path d="M6 11.500H.5V.5h11v4M2 3.500h8M2 6h4M2 8.500h4" fill="none" stroke="#fff"/><circle cx="9.800" cy="9.300" r="4" fill="#fff"/><path d="M8 8l2 1-1 2M11 7l1.500 2" fill="none" stroke="#2b579a"/></svg></button>
  </div>
  <div class="zoom">
    <button aria-label="缩小"><svg width="10" height="12"><path d="M0 6h10" stroke="#fff" stroke-width="2"/></svg></button>
    <input type="range" min="0" max="100" value="49" aria-label="缩放">
    <button aria-label="放大"><svg width="12" height="12"><path d="M0 6h12M6 0v12" stroke="#fff" stroke-width="2"/></svg></button>
    <span>98%</span>
  </div>
</footer>

<div class="desktop-bar">
  <div class="strip-tab"><svg width="20" height="8" viewBox="0 0 20 8"><path d="M0 8V6l4-3h3l3-3 3 3h3l4 3v2z" fill="#f79228"/><path d="M3 8q2-4 7-4t7 4z" fill="#fdca2d"/></svg></div>
  <div class="strip-light"></div>
  <span class="clock">10:41</span>
</div>
</body>
</html>
```
FILE: styles.css
```css
* { box-sizing: border-box; }

html, body { height: 100%; }

body {
  margin: 0;
  display: flex;
  flex-direction: column;
  overflow: hidden;
  background: #fff;
  color: #444;
  font: 15px/20px "Noto Sans", "Noto Sans CJK SC", sans-serif;
  text-spacing-trim: space-all;
}

button {
  margin: 0;
  padding: 0;
  border: 0;
  background: none;
  color: inherit;
  font: inherit;
  display: flex;
  align-items: center;
  justify-content: center;
  white-space: nowrap;
}

svg { display: block; flex: none; overflow: visible; }
.defs { display: none; }
.svg-latin { font-family: "Noto Sans", sans-serif; }
.svg-cjk { font-family: "Noto Sans CJK SC", sans-serif; }
.lat { font-size: 16px; }

.caret {
  flex: none;
  border: 3px solid transparent;
  border-top: 4px solid #666;
  border-bottom: 0;
}
.caret.up { border-top: 0; border-bottom: 4px solid #b8b8b8; }
.bar { width: 7px; height: 1px; background: #666; margin-bottom: 3px; }

/* title bar */
.titlebar {
  display: grid;
  grid-template-columns: 1fr auto 1fr;
  align-items: center;
  height: 29px;
  flex: none;
  padding-bottom: 3px;
}
.quick { display: flex; align-items: center; padding-left: 10px; }
.q-save { margin-left: 15px; }
.q-undo { margin-left: 16px; gap: 6px; }
.q-redo { margin-left: 16px; }
.q-more { margin-left: 15px; flex-direction: column; }
.title { margin: 0; padding-right: 4px; font-size: 15px; font-weight: 400; }
.window { display: flex; justify-content: flex-end; }
.window button { width: 33px; height: 24px; }
.help { font-weight: 700; color: #666; }

/* tabs */
.tabs { display: flex; height: 30px; flex: none; border-bottom: 1px solid #d2d2d2; }
.tabs button { padding-bottom: 3px; }
.tab-file { width: 73px; height: 30px; background: #2b579a; color: #fff; }
.tab-home {
  width: 57px;
  height: 30px;
  margin-left: 4px;
  background: #fff;
  border: 1px solid #d2d2d2;
  border-bottom: 0;
  color: #2b579a;
}
.tab-list { display: flex; gap: 29px; margin-left: 15px; flex: 1; }
.login { align-self: center; color: #444; text-decoration: none; margin-right: 7px; padding-bottom: 3px; }

/* ribbon */
.ribbon { display: flex; flex: none; height: 114px; padding-top: 4px; border-bottom: 1px solid #d2d2d2; }
.group {
  display: flex;
  flex-direction: column;
  justify-content: space-between;
  border-right: 1px solid #e1e1e1;
  margin-bottom: 4px;
}
.g-clip { width: 137px; }
.g-font { width: 361px; }
.g-para { width: 303px; }
.g-styles { flex: 1; min-width: 0; }
.g-edit { width: 86px; }
.g-acro { width: 146px; }
.g-save { width: 74px; }
.name {
  height: 18px;
  margin-bottom: -1px;
  line-height: 18px;
  text-align: center;
  color: #666;
}
.with-launch { display: grid; grid-template-columns: 1fr 20px; align-items: center; }
.launch { margin: 4px 0 0 6px; }

.clip { display: flex; }
.paste { flex-direction: column; width: 58px; padding-top: 4px; }
.paste span { line-height: 22px; }
.paste .caret { margin-top: 4px; }
.stack { display: flex; flex-direction: column; }
.stack button { height: 27px; gap: 4px; justify-content: flex-start; padding-bottom: 2px; }

.rows { display: flex; flex-direction: column; gap: 10px; padding: 10px 0 0 4px; }
.row { display: flex; height: 27px; align-items: center; }
.tool { width: 26px; height: 27px; flex: none; }
.tool.split { width: 39px; justify-content: flex-start; }
.tool.split > :first-child { margin: 0 auto; }
.tool.split .caret { margin-right: 5px; }
.tool.aa { width: 38px; }
.aa b { font-weight: 400; }
.tool.on { background: #c2d5f2; }
.sep { width: 1px; height: 22px; background: #e1e1e1; margin: 0 4px; }
.combo {
  display: flex;
  align-items: center;
  flex: none;
  width: 56px;
  height: 27px;
  border: 1px solid #ababab;
  background: #fff;
  padding: 0 5px 0 2px;
}
.combo.wide { width: 111px; margin-right: -1px; }
.combo.mid { width: 81px; margin-right: -1px; height: 30px; }
.combo.small { width: 51px; height: 30px; }
.combo select {
  appearance: none;
  flex: 1;
  min-width: 0;
  padding: 0 0 2px;
  margin-right: 5px;
  border: 0;
  background: none;
  color: #000;
  font: inherit;
}
.fmt { font-size: 16px; color: #555; }
.it { font-family: "Liberation Serif", serif; font-style: italic; font-size: 18px; }
.un { text-decoration: underline; }
.strike { font-size: 12px; }
.script { font-size: 16px; line-height: 16px; color: #555; }
.script sub, .script sup { font-size: 9px; line-height: 0; color: #3b76b5; }

/* style gallery */
.gallery { display: flex; height: 75px; margin: 2px 6px 0 5px; border: 1px solid #ababab; }
.style {
  flex: 1;
  min-width: 0;
  flex-direction: column;
  justify-content: flex-start;
  height: 71px;
  margin: 1px 0;
  padding: 5px 8px 0;
}
.style.on { border: 5px solid #c2d5f2; padding: 0 3px; }
.sample { width: 100%; height: 38px; line-height: 38px; overflow: hidden; color: #000; text-align: left; }
.sample.h1 { font-size: 31px; font-weight: 700; line-height: 34px; }
.sample.h2 { font-size: 24px; }
.sample.em { font-style: italic; }
.sample.soft { color: #404040; }
.label { color: #666; line-height: 20px; }
.label small { font-size: 10px; }
.scroll { width: 18px; flex: none; display: flex; flex-direction: column; border-left: 1px solid #ababab; }
.scroll button { flex: 1; flex-direction: column; border-bottom: 1px solid #ababab; }
.scroll button:last-child { border-bottom: 0; }

.g-edit .stack { padding-left: 8px; }
.g-edit .stack .far { margin-left: 6px; }
.bigs { display: flex; justify-content: center; gap: 12px; }
.g-acro .bigs { padding-right: 4px; }
.big { flex-direction: column; }
.big svg { margin: 6px 0 4px; height: 34px; }
.big span { line-height: 19px; }
.collapse { width: 61px; display: flex; align-items: flex-end; justify-content: flex-end; padding: 0 11px 6px 0; }

/* document */
.workspace {
  position: relative;
  flex: 1;
  min-height: 0;
  overflow: hidden;
  padding: 21px 21px 0 0;
  background: linear-gradient(#fff, #eee);
}
.stage { position: relative; width: 975px; margin: 0 auto; }
.page {
  min-height: 1200px;
  padding-bottom: 118px;
  border: 1px solid #c6c6c6;
  background: #fff;
  color: #222;
  font: 300 23px/49px "Noto Sans CJK SC", sans-serif;
}
.marks { display: flex; justify-content: space-between; padding: 88px 117px 0 118px; }
.mark { width: 29px; height: 29px; border-bottom: 1px solid #ababab; }
.mark.left { border-right: 1px solid #ababab; }
.mark.right { border-left: 1px solid #ababab; }
.page p { margin: 0 0 0 147px; }
.page p span { display: block; width: max-content; padding-bottom: 2px; background: #c6c6c6; }
.page p span:first-child { margin-left: 39px; }
.page p span.end { padding-right: 11px; }
.page p.tall span.end { padding-bottom: 3px; }
.typo { font-style: normal; text-decoration: underline wavy #e00000 1px; }

/* floating toolbar */
.mini {
  position: absolute;
  left: 530px;
  top: 106px;
  display: flex;
  width: 290px;
  height: 83px;
  border: 1px solid #c6c6c6;
  background: #fff;
  box-shadow: 1px 2px 4px rgba(0, 0, 0, .2);
}
.mini-main { width: 239px; margin: 3px 0; padding: 4px 0 0 3px; border-right: 1px solid #e1e1e1; }
.mini-main .row { height: 30px; }
.mini-main .row + .row { margin-top: 7px; }
.mini-style { flex: 1; flex-direction: column; gap: 12px; justify-content: flex-start; padding-top: 9px; }
.mini-style .top { display: flex; align-items: center; gap: 4px; padding-left: 4px; }

/* context menu */
.menu {
  position: absolute;
  left: 530px;
  top: 207px;
  width: 186px;
  padding: 1px;
  border: 1px solid #c6c6c6;
  background: #fff;
  box-shadow: 2px 3px 4px rgba(0, 0, 0, .25);
}
.menu > button { width: 100%; height: 30px; padding-left: 4px; justify-content: flex-start; color: #555; }
.menu > button > svg, .noicon { width: 20px; margin-right: 12px; flex: none; }
.menu > .hot { background: #d5e1f2; }
.menu hr { margin: 0 0 1px 38px; border: 0; height: 1px; background: #e1e1e1; }
.menu-head { display: flex; align-items: center; height: 26px; padding-left: 4px; color: #666; }
.menu-head strong { flex: 1; height: 26px; line-height: 26px; margin-left: 5px; padding-left: 7px; background: #eee; }
.menu-paste { display: flex; gap: 12px; height: 37px; padding-left: 36px; }
.menu u { text-underline-offset: 2px; }
.next { margin-left: auto; margin-right: 12px; border: 4px solid transparent; border-left: 5px solid #666; border-right: 0; }

/* tutorial annotation */
.focus-box { position: absolute; left: 520px; top: 358px; width: 213px; height: 45px; border: 3px solid #fd3c3a; }
.arrow { position: absolute; left: 738px; top: 240px; }
.callout {
  position: absolute;
  left: 955px;
  top: 233px;
  margin: 0;
  color: #fd3c3a;
  font: 33px/44px "Noto Sans CJK SC", sans-serif;
  white-space: nowrap;
}
.key { font-family: "Noto Sans", sans-serif; font-size: 35px; line-height: 1; }

.watermark { position: absolute; right: 97px; bottom: 2px; }
.wm-glow { filter: drop-shadow(0 0 1px #aaa) drop-shadow(0 0 1px #ccc); }
.wm-latin { font-family: "Liberation Sans", sans-serif; font-weight: 700; }
.wm-cjk { font-family: "Noto Sans CJK SC", sans-serif; font-weight: 900; }
.wm-url { font-family: "Noto Sans", sans-serif; }

/* status bar */
.status { display: flex; align-items: center; flex: none; height: 27px; padding: 0 20px 0 7px; background: #2b579a; color: #fff; }
.status > span, .zoom span { padding-bottom: 3px; }
.s-words { margin-left: 21px; }
.s-proof { margin-left: 22px; }
.s-lang { margin-left: 19px; }
.s-mode { margin-left: 20px; }
.s-macro { margin-left: 18px; }
.views { display: flex; margin-left: auto; }
.views button { width: 41px; height: 27px; }
.views .on { background: #1e4a8c; }
.zoom { display: flex; align-items: center; margin-left: 5px; }
.zoom input { appearance: none; width: 125px; height: 14px; margin: 0 4px; background: linear-gradient(#fff, #fff) center / 100% 1px no-repeat; }
.zoom input::-webkit-slider-thumb { appearance: none; width: 5px; height: 14px; background: #fff; }
.zoom span { margin-left: 15px; }

.desktop-bar { display: flex; flex: none; height: 9px; overflow: hidden; background: #eee; }
.strip-tab { width: 360px; margin: 1px 0 0 60px; padding: 1px 0 0 295px; background: #fff; border: 1px solid #c6c6c6; border-bottom: 0; }
.strip-light { width: 61px; margin-left: 188px; background: #f8f8f8; }
.clock { margin-left: auto; padding: 4px 90px 0 0; margin-right: 4px; color: #000; border-right: 1px solid #bbb; }
```
